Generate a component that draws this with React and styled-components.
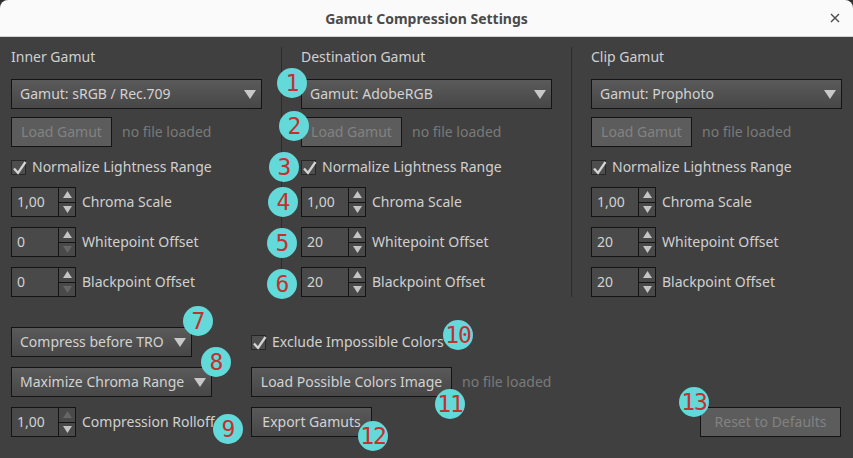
import React from 'react'
import styled, { createGlobalStyle } from 'styled-components'

const GlobalStyle = createGlobalStyle`
  html, body {
    margin: 0;
    padding: 0;
    background: #2e2e2e;
  }
  body {
    font-family: "Noto Sans", "DejaVu Sans", sans-serif;
    font-size: 14px;
  }
  * { box-sizing: border-box; }
`

const Window = styled.div`
  position: relative;
  width: 853px;
  height: 458px;
  display: flex;
  flex-direction: column;
  background: #404040;
  border-radius: 8px 8px 0 0;
  overflow: hidden;
  color: #d0d0d0;
`

const TitleBar = styled.div`
  height: 37px;
  flex-shrink: 0;
  display: flex;
  align-items: center;
  justify-content: center;
  position: relative;
  background: #fafafa;
  border-bottom: 1px solid #d2d2d2;
`

const Title = styled.div`
  font-weight: bold;
  font-size: 14px;
  color: #4a4a4a;
  margin-top: 1px;
`

const Close = styled.div`
  position: absolute;
  right: 13px;
  top: 13px;
  width: 10px;
  height: 10px;
  display: flex;
`

const Columns = styled.div`
  display: flex;
  padding: 10px 0 9px 11px;
`

const Column = styled.div`
  width: 251px;
  display: flex;
  flex-direction: column;
`

const Divider = styled.div`
  width: 1px;
  background: #2c2c2c;
  margin: 0 19px 0 19px;
`

const Header = styled.div`
  height: 20px;
  line-height: 20px;
  margin-bottom: 12px;
`

const Select = styled.div`
  width: ${p => p.$w || 251}px;
  height: 30px;
  display: flex;
  align-items: center;
  justify-content: space-between;
  padding: 0 5px 2px 8px;
  border: 1px solid #141414;
  background: linear-gradient(#5a5a5a, #474747);
  color: #d2d2d2;
  margin-bottom: ${p => p.$mb ?? 8}px;

  svg { margin-top: 2px; }
`

const Button = styled.div`
  height: 30px;
  display: inline-flex;
  align-items: center;
  justify-content: center;
  padding-bottom: 2px;
  width: ${p => p.$w}px;
  border: 1px solid #141414;
  background: ${p => p.$disabled ? '#5c5c5c' : 'linear-gradient(#595959, #474747)'};
  color: ${p => p.$disabled ? '#828282' : '#d2d2d2'};
  flex-shrink: 0;
`

const FileRow = styled.div`
  display: flex;
  align-items: center;
  gap: 10px;
  height: 30px;
  margin-bottom: ${p => p.$mb ?? 10}px;
`

const Muted = styled.span`
  color: #7a7a7a;
  padding-bottom: 2px;
`

const Label = styled.span`
  padding-bottom: 2px;
`

const CheckRow = styled.div`
  display: flex;
  align-items: center;
  gap: 6px;
  height: ${p => p.$h || 20}px;
  margin-bottom: ${p => p.$mb ?? 10}px;
`

const Box = styled.div`
  width: 15px;
  height: 15px;
  border: 1px solid #262626;
  background: #4e4e4e;
  position: relative;
  flex-shrink: 0;

  svg {
    position: absolute;
    left: -1px;
    top: -2px;
  }
`

const SpinRow = styled.div`
  display: flex;
  align-items: center;
  gap: 6px;
  height: 30px;
  margin-bottom: ${p => p.$mb ?? 10}px;
`

const Spin = styled.div`
  width: 65px;
  height: 30px;
  display: flex;
  border: 1px solid #141414;
  background: #494949;
  flex-shrink: 0;
`

const SpinField = styled.div`
  flex: 1;
  display: flex;
  align-items: center;
  padding: 0 0 2px 5px;
  color: #d2d2d2;
`

const SpinArrows = styled.div`
  width: 17px;
  display: flex;
  flex-direction: column;
  border-left: 1px solid #141414;
`

const ArrowCell = styled.div`
  flex: 1;
  display: flex;
  align-items: center;
  justify-content: center;
  & + & { border-top: 1px solid #141414; }
`

const Bottom = styled.div`
  display: flex;
  padding: 21px 12px 0 11px;
`

const BottomLeft = styled.div`
  width: 240px;
  display: flex;
  flex-direction: column;
`

const BottomMid = styled.div`
  display: flex;
  flex-direction: column;
`

const BottomRight = styled.div`
  flex: 1;
  display: flex;
  justify-content: flex-end;
  align-items: flex-end;
`

const Badge = styled.div`
  position: absolute;
  left: ${p => p.$x - 15}px;
  top: ${p => p.$y - 15}px;
  width: 30px;
  height: 30px;
  border-radius: 50%;
  background: #64d9d9;
  color: #c42f2f;
  font-family: "DejaVu Sans Mono", monospace;
  font-size: 23px;
  line-height: 30px;
  text-align: center;
  letter-spacing: -1px;
`

const Down = ({ c = '#c8c8c8' }) => (
  <svg width="12" height="10" viewBox="0 0 12 10"><polygon points="0,1 12,1 6,10" fill={c} /></svg>
)

const Tri = ({ up, off }) => (
  <svg width="9" height="7" viewBox="0 0 9 7">
    <polygon points={up ? '0,7 9,7 4.5,0' : '0,0 9,0 4.5,7'} fill={off ? '#666' : '#c4c4c4'} />
  </svg>
)

const Check = () => (
  <svg width="17" height="17" viewBox="0 0 17 17">
    <path d="M3 9.5 L7 14 L14.5 3" stroke="#d4d4d4" strokeWidth="2.3" fill="none" />
  </svg>
)

const SpinBox = ({ value, label, upOff, downOff, mb }) => (
  <SpinRow $mb={mb}>
    <Spin>
      <SpinField>{value}</SpinField>
      <SpinArrows>
        <ArrowCell><Tri up off={upOff} /></ArrowCell>
        <ArrowCell><Tri off={downOff} /></ArrowCell>
      </SpinArrows>
    </Spin>
    <Label>{label}</Label>
  </SpinRow>
)

const GamutColumn = ({ title, gamut, values }) => (
  <Column>
    <Header>{title}</Header>
    <Select>{gamut}<Down /></Select>
    <FileRow>
      <Button $w={101} $disabled>Load Gamut</Button>
      <Muted>no file loaded</Muted>
    </FileRow>
    <CheckRow>
      <Box><Check /></Box>
      <Label>Normalize Lightness Range</Label>
    </CheckRow>
    <SpinBox value={values[0]} label="Chroma Scale" />
    <SpinBox value={values[1]} label="Whitepoint Offset" downOff={values[1] === '0'} />
    <SpinBox value={values[2]} label="Blackpoint Offset" downOff={values[2] === '0'} mb={0} />
  </Column>
)

const badges = [
  [292, 83], [294, 126], [284, 167], [283, 202], [282, 243], [282, 284],
  [198, 321], [216, 362], [228, 429], [458, 335], [450, 404], [373, 436], [694, 402],
]

export default function App() {
  return (
    <>
      <GlobalStyle />
      <Window>
        <TitleBar>
          <Title>Gamut Compression Settings</Title>
          <Close>
            <svg width="10" height="10" viewBox="0 0 10 10">
              <path d="M1 1 L9 9 M9 1 L1 9" stroke="#4a4a4a" strokeWidth="1.4" />
            </svg>
          </Close>
        </TitleBar>
        <Columns>
          <GamutColumn title="Inner Gamut" gamut="Gamut: sRGB / Rec.709" values={['1,00', '0', '0']} />
          <Divider />
          <GamutColumn title="Destination Gamut" gamut="Gamut: AdobeRGB" values={['1,00', '20', '20']} />
          <Divider />
          <GamutColumn title="Clip Gamut" gamut="Gamut: Prophoto" values={['1,00', '20', '20']} />
        </Columns>
        <Bottom>
          <BottomLeft>
            <Select $w={181} $mb={10}>Compress before TRO<Down /></Select>
            <Select $w={201} $mb={10}>Maximize Chroma Range<Down /></Select>
            <SpinBox value="1,00" label="Compression Rolloff" upOff mb={0} />
          </BottomLeft>
          <BottomMid>
            <CheckRow $h={30} $mb={10}>
              <Box><Check /></Box>
              <Label>Exclude Impossible Colors</Label>
            </CheckRow>
            <FileRow>
              <Button $w={201}>Load Possible Colors Image</Button>
              <Muted>no file loaded</Muted>
            </FileRow>
            <FileRow $mb={0}>
              <Button $w={121}>Export Gamuts</Button>
            </FileRow>
          </BottomMid>
          <BottomRight>
            <Button $w={141} $disabled>Reset to Defaults</Button>
          </BottomRight>
        </Bottom>
        {badges.map(([x, y], i) => (
          <Badge key={i} $x={x} $y={y}>{i + 1}</Badge>
        ))}
      </Window>
    </>
  )
}
